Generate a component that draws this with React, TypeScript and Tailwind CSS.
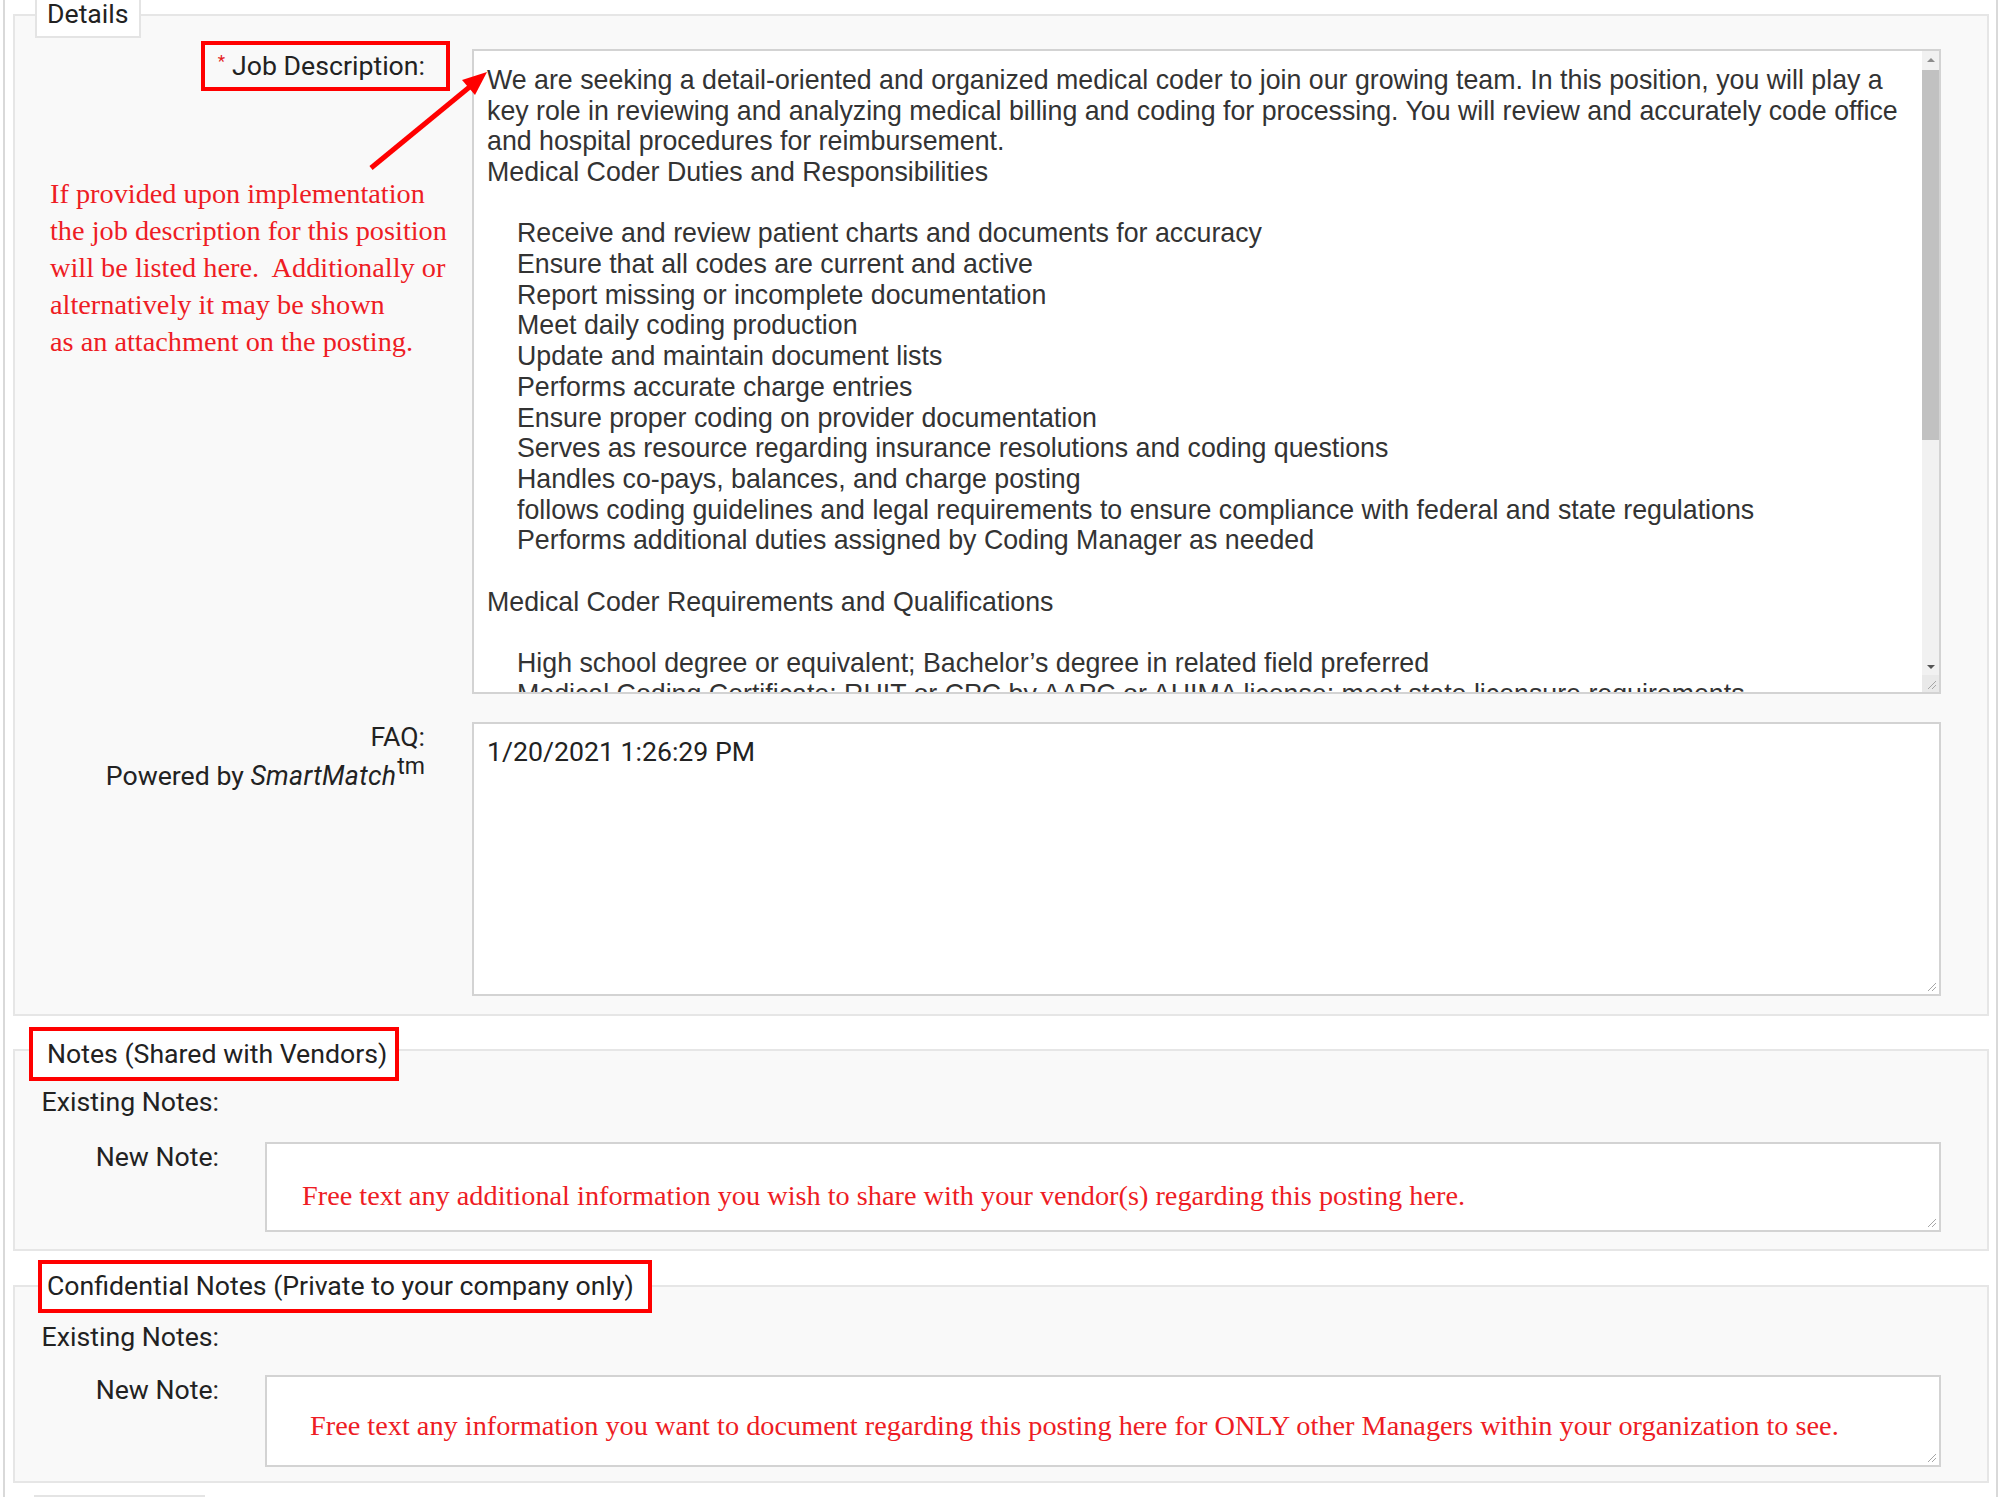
import React from 'react';

const duties = [
  'Receive and review patient charts and documents for accuracy',
  'Ensure that all codes are current and active',
  'Report missing or incomplete documentation',
  'Meet daily coding production',
  'Update and maintain document lists',
  'Performs accurate charge entries',
  'Ensure proper coding on provider documentation',
  'Serves as resource regarding insurance resolutions and coding questions',
  'Handles co-pays, balances, and charge posting',
  'follows coding guidelines and legal requirements to ensure compliance with federal and state regulations',
  'Performs additional duties assigned by Coding Manager as needed',
];

const requirements = [
  'High school degree or equivalent; Bachelor\u2019s degree in related field preferred',
  'Medical Coding Certificate: RHIT or CPC by AAPC or AHIMA license; meet state licensure requirements',
];

function Grip() {
  return (
    <svg width="11" height="11" viewBox="0 0 11 11" className="absolute bottom-[2px] right-[2px]">
      <path d="M10 2 L2 10 M10 6 L6 10" stroke="#a6a6a6" strokeWidth="1" />
    </svg>
  );
}

function Scrollbar() {
  return (
    <div className="flex w-[17px] flex-col bg-[#f1f1f1]">
      <div className="flex h-[17px] items-center justify-center">
        <svg width="8" height="4" viewBox="0 0 8 4">
          <path d="M0 4 L4 0 L8 4Z" fill="#8c8c8c" />
        </svg>
      </div>
      <div className="flex-1 pt-[2px]">
        <div className="h-[370px] bg-[#c1c1c1]" />
      </div>
      <div className="flex h-[17px] items-center justify-center">
        <svg width="8" height="4" viewBox="0 0 8 4">
          <path d="M0 0 L4 4 L8 0Z" fill="#555" />
        </svg>
      </div>
      <div className="relative h-[17px] bg-[#e9e9e9]">
        <Grip />
      </div>
    </div>
  );
}

export default function App() {
  return (
    <div className="relative h-[1497px] w-[2000px] overflow-hidden bg-white font-[Roboto,sans-serif] text-[26.67px] leading-[31px] text-[#222]">
      <div className="ml-[3px] mr-[2px] min-h-full border-x-2 border-[#d9d9d9] pt-[14px]">
        {/* Details */}
        <div className="ml-[8px] mr-[7px] border-2 border-[#e6e6e6] bg-[#f9f9f9] pb-[18px]">
          <div className="-mt-[26px] ml-[20px] flex h-[48px] w-fit items-center border-2 border-[#e4e4e4] bg-white px-[10px]">
            Details
          </div>

          <div className="mt-[11px] flex items-start">
            <div className="flex w-[457px] flex-col items-end pr-[22px]">
              <div className="-mt-[8px] flex h-[50px] items-center border-4 border-[#ff0000] pl-[13px] pr-[21px]">
                <span className="mr-[7px] self-start pt-[8px] text-[17px] leading-none text-[#e41b1b]">*</span>
                <span>Job Description:</span>
              </div>
              <p className="mt-[84px] self-start whitespace-pre pl-[35px] font-['Liberation_Serif','Times_New_Roman',serif] text-[28.3px] leading-[37px] text-[#ee1c24]">
                If provided upon implementation
                <br />
                the job description for this position
                <br />
                will be listed here.  Additionally or
                <br />
                alternatively it may be shown
                <br />
                as an attachment on the posting.
              </p>
            </div>

            <div className="flex h-[645px] w-[1469px] border-2 border-[#d3d3d3] bg-white">
              <div className="flex-1 overflow-hidden whitespace-nowrap pl-[13px] pt-[14px] font-['Liberation_Sans',Arial,sans-serif] text-[26.75px] leading-[30.68px] text-[#333]">
                <div>We are seeking a detail-oriented and organized medical coder to join our growing team. In this position, you will play a</div>
                <div>key role in reviewing and analyzing medical billing and coding for processing. You will review and accurately code office</div>
                <div>and hospital procedures for reimbursement.</div>
                <div>Medical Coder Duties and Responsibilities</div>
                <div className="h-[30.68px]" />
                {duties.map((d) => (
                  <div key={d} className="pl-[30px]">{d}</div>
                ))}
                <div className="h-[30.68px]" />
                <div>Medical Coder Requirements and Qualifications</div>
                <div className="h-[30.68px]" />
                {requirements.map((r) => (
                  <div key={r} className="pl-[30px]">{r}</div>
                ))}
              </div>
              <Scrollbar />
            </div>
          </div>

          <div className="mt-[28px] flex items-start">
            <div className="w-[457px] pr-[47px] text-right">
              <div>FAQ:</div>
              <div className="mt-[8px]">
                Powered by <i className="tracking-[0.3px]">SmartMatch</i>
                <sup className="ml-[1px] text-[23px]">tm</sup>
              </div>
            </div>
            <div className="relative h-[274px] w-[1469px] border-2 border-[#d3d3d3] bg-white pl-[13px] pt-[13px]">
              1/20/2021 1:26:29 PM
              <Grip />
            </div>
          </div>
        </div>

        {/* Notes (Shared with Vendors) */}
        <div className="ml-[8px] mr-[7px] mt-[33px] border-2 border-[#e6e6e6] bg-[#f9f9f9] pb-[17px]">
          <div className="-mt-[24px] ml-[14px] flex h-[54px] w-fit items-center border-4 border-[#ff0000] bg-white pl-[14px] pr-[8px]">
            Notes (Shared with Vendors)
          </div>
          <div className="mt-[6px] w-[250px] pr-[46px] text-right">Existing Notes:</div>
          <div className="mt-[24px] flex items-start">
            <div className="w-[250px] pr-[46px] text-right">New Note:</div>
            <div className="relative h-[90px] w-[1676px] whitespace-nowrap border-2 border-[#d3d3d3] bg-white pl-[35px] pt-[33px] font-['Liberation_Serif','Times_New_Roman',serif] text-[28.3px] leading-[37px] text-[#ee1c24]">
              Free text any additional information you wish to share with your vendor(s) regarding this posting here.
              <Grip />
            </div>
          </div>
        </div>

        {/* Confidential Notes */}
        <div className="ml-[8px] mr-[7px] mt-[34px] border-2 border-[#e6e6e6] bg-[#f9f9f9] pb-[14px]">
          <div className="-mt-[27px] ml-[23px] flex h-[53px] w-fit items-center border-4 border-[#ff0000] bg-white pl-[5px] pr-[14px]">
            Confidential Notes (Private to your company only)
          </div>
          <div className="mt-[9px] w-[250px] pr-[46px] text-right">Existing Notes:</div>
          <div className="mt-[22px] flex items-start">
            <div className="w-[250px] pr-[46px] text-right">New Note:</div>
            <div className="relative h-[92px] w-[1676px] whitespace-nowrap border-2 border-[#d3d3d3] bg-white pl-[43px] pt-[30px] font-['Liberation_Serif','Times_New_Roman',serif] text-[28.3px] leading-[37px] text-[#ee1c24]">
              Free text any information you want to document regarding this posting here for ONLY other Managers within your organization to see.
              <Grip />
            </div>
          </div>
        </div>

        {/* next section, cut off */}
        <div className="ml-[8px] mr-[7px] mt-[36px] h-[120px] border-2 border-[#e6e6e6] bg-[#f9f9f9]">
          <div className="-mt-[26px] ml-[19px] h-[48px] w-[171px] border-2 border-[#e4e4e4] bg-white" />
        </div>
      </div>

      {/* annotation arrow */}
      <svg className="pointer-events-none absolute left-0 top-0" width="520" height="200" viewBox="0 0 520 200">
        <line x1="371" y1="168" x2="472" y2="85" stroke="#ff0000" strokeWidth="5" />
        <polygon points="487,72 475,95 462,80" fill="#ff0000" />
      </svg>
    </div>
  );
}
